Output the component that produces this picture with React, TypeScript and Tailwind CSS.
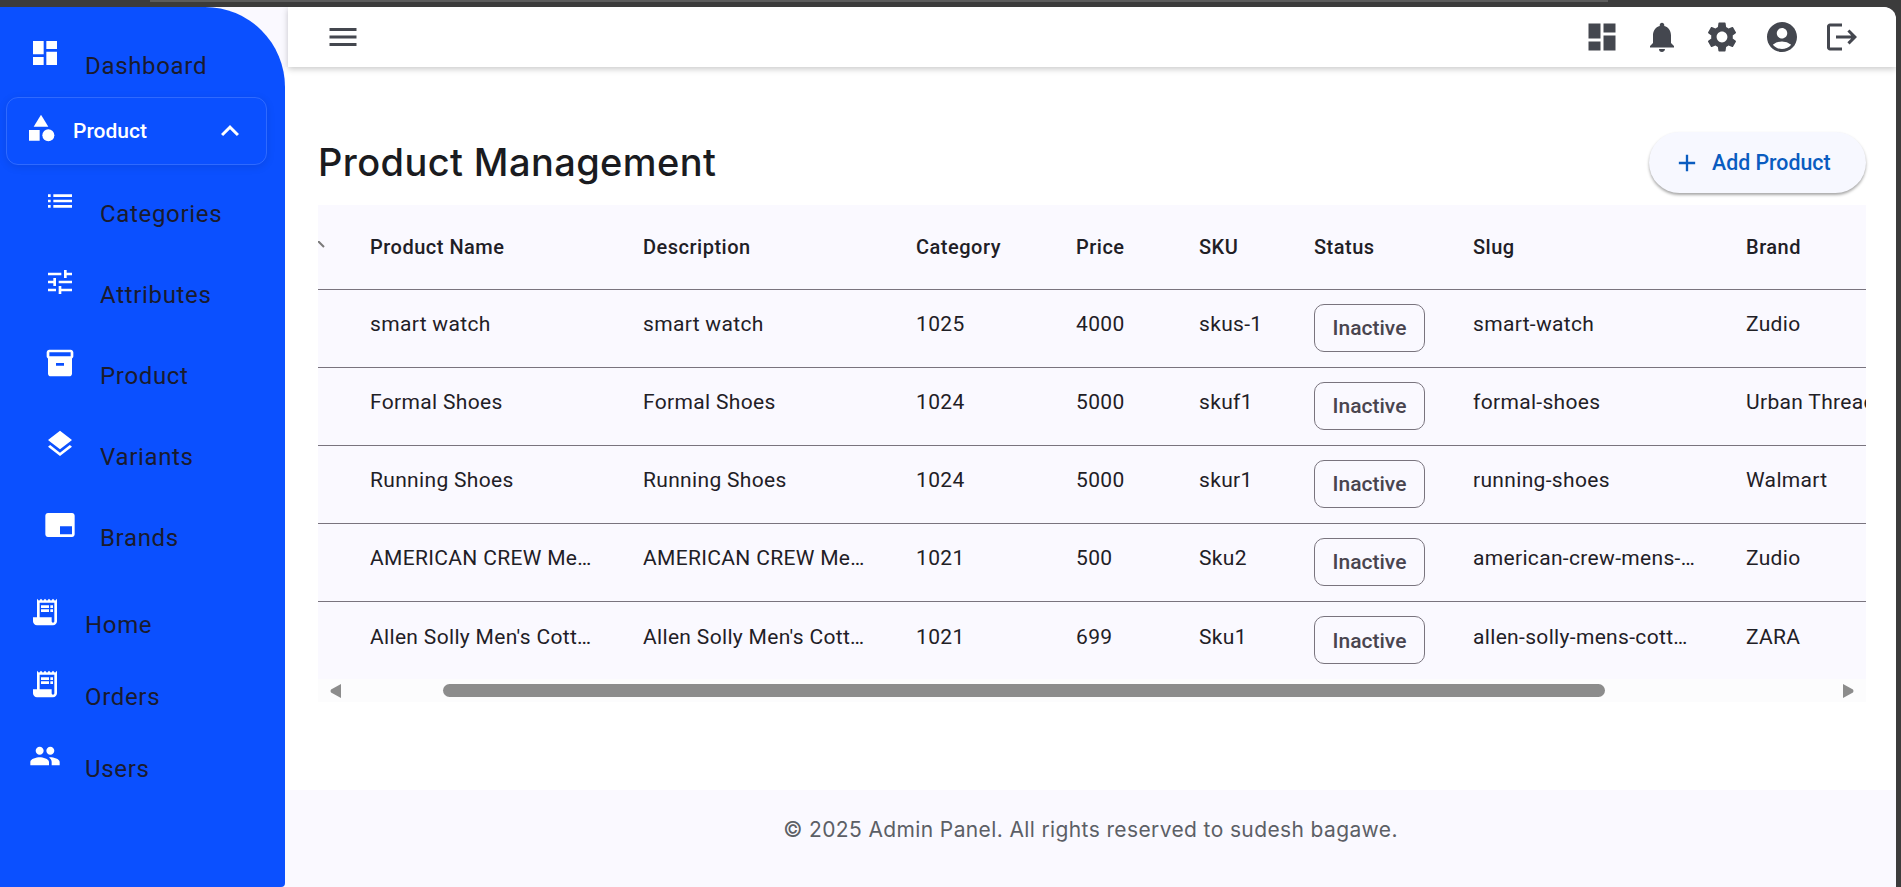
import type { ReactNode } from 'react';
import {
  MdDashboard,
  MdCategory,
  MdKeyboardArrowUp,
  MdList,
  MdTune,
  MdInventory2,
  MdLayers,
  MdBrandingWatermark,
  MdReceiptLong,
  MdPeople,
  MdMenu,
  MdNotifications,
  MdSettings,
  MdAccountCircle,
  MdAdd,
  MdLogout,
} from 'react-icons/md';

const subItems = [
  { name: 'Categories', icon: MdList },
  { name: 'Attributes', icon: MdTune },
  { name: 'Product', icon: MdInventory2 },
  { name: 'Variants', icon: MdLayers },
  { name: 'Brands', icon: MdBrandingWatermark },
];

const bottomItems = [
  { name: 'Home', icon: MdReceiptLong },
  { name: 'Orders', icon: MdReceiptLong },
  { name: 'Users', icon: MdPeople },
];

const columns = ['Product Name', 'Description', 'Category', 'Price', 'SKU', 'Status', 'Slug', 'Brand'];

const rows = [
  ['smart watch', 'smart watch', '1025', '4000', 'skus-1', 'smart-watch', 'Zudio'],
  ['Formal Shoes', 'Formal Shoes', '1024', '5000', 'skuf1', 'formal-shoes', 'Urban Threads'],
  ['Running Shoes', 'Running Shoes', '1024', '5000', 'skur1', 'running-shoes', 'Walmart'],
  ['AMERICAN CREW Mens Fiber', 'AMERICAN CREW Mens Fiber', '1021', '500', 'Sku2', 'american-crew-mens-fiber', 'Zudio'],
  ["Allen Solly Men's Cotton Shirt", "Allen Solly Men's Cotton Shirt", '1021', '699', 'Sku1', 'allen-solly-mens-cotton-shirt', 'ZARA'],
];

function NavLabel({ children }: { children: ReactNode }) {
  return <span className="mt-[13px] text-[24px] leading-[32px] tracking-[0.67px] text-[#1a1b2e]">{children}</span>;
}

function Sidebar() {
  return (
    <aside className="flex w-[285px] shrink-0 flex-col rounded-tr-[80px] rounded-br-[4px] bg-[#0b50ff] pt-[30px]">
      {/* Dashboard */}
      <div className="flex h-[60px] items-start gap-[24px] pl-[29px]">
        <MdDashboard size={32} className="shrink-0 text-white" />
        <NavLabel>Dashboard</NavLabel>
      </div>

      {/* Open group */}
      <div className="mr-[18px] ml-[6px] flex h-[68px] items-center rounded-[12px] border border-white/15 pr-[18px] pl-[18px] shadow-[0_2px_8px_rgba(0,0,0,0.1)]">
        <MdCategory size={32} className="mb-[6px] shrink-0 text-white" />
        <span className="mt-[2px] ml-[16px] flex-1 text-[21px] font-medium text-white">Product</span>
        <MdKeyboardArrowUp size={36} className="text-white" />
      </div>

      <div className="flex flex-col pt-[20px]">
        {subItems.map((item) => {
          const Icon = item.icon;
          return (
            <div key={item.name} className="flex h-[80.9px] items-start gap-[24px] pl-[44px]">
              <Icon size={32} className="shrink-0 text-white" />
              <NavLabel>{item.name}</NavLabel>
            </div>
          );
        })}
      </div>

      <div className="flex flex-col pt-[6.5px]">
        {bottomItems.map((item) => {
          const Icon = item.icon;
          return (
            <div key={item.name} className="flex h-[72px] items-start gap-[24px] pl-[29px]">
              <Icon size={32} className="shrink-0 text-white" />
              <NavLabel>{item.name}</NavLabel>
            </div>
          );
        })}
      </div>
    </aside>
  );
}

function Topbar() {
  return (
    <header className="relative z-10 ml-[3px] flex h-[60px] shrink-0 items-center justify-between rounded-tr-[12px] bg-white pr-[36px] pl-[37px] shadow-[0_2px_6px_rgba(0,0,0,0.22)]">
      <MdMenu size={36} className="text-[#44474f]" />
      <div className="flex items-center gap-[24px]">
        <MdDashboard size={36} className="text-[#44474f]" />
        <MdNotifications size={36} className="text-[#44474f]" />
        <MdSettings size={36} className="text-[#44474f]" />
        <MdAccountCircle size={36} className="text-[#44474f]" />
        <MdLogout size={36} className="text-[#44474f]" />
      </div>
    </header>
  );
}

function ProductTable() {
  return (
    <div className="overflow-hidden bg-[#faf9ff]">
      <table className="w-[1701px] table-fixed text-left text-[21px] tracking-[0.33px] text-[#1f2026]">
        <colgroup>
          <col className="w-[52px]" />
          <col className="w-[273px]" />
          <col className="w-[273px]" />
          <col className="w-[160px]" />
          <col className="w-[123px]" />
          <col className="w-[115px]" />
          <col className="w-[159px]" />
          <col className="w-[273px]" />
          <col className="w-[273px]" />
        </colgroup>
        <thead>
          <tr className="h-[84px] border-b border-[#79747e]">
            <th className="p-0">
              <svg width="8" height="8" viewBox="0 0 8 8" className="mb-[4px]">
                <path d="M0 0L6 6" stroke="#7a7a7a" strokeWidth="2" />
              </svg>
            </th>
            {columns.map((col) => (
              <th key={col} className="p-0 text-[20px] font-medium tracking-[0.5px]">
                {col}
              </th>
            ))}
          </tr>
        </thead>
        <tbody>
          {rows.map((row, i) => (
            <tr key={row[0]} className={i < rows.length - 1 ? 'h-[78px] border-b border-[#79747e]' : 'h-[78px]'}>
              <td />
              <td className="truncate pr-[49px] pb-[6px]">{row[0]}</td>
              <td className="truncate pr-[49px] pb-[6px]">{row[1]}</td>
              <td className="pb-[6px]">{row[2]}</td>
              <td className="pb-[6px]">{row[3]}</td>
              <td className="pb-[6px]">{row[4]}</td>
              <td>
                <span className="inline-flex h-[48px] w-[111px] items-center justify-center rounded-[10px] border border-[#79747e] pt-[2px] text-[21px] font-medium tracking-normal text-[#49454f]">
                  Inactive
                </span>
              </td>
              <td className="truncate pr-[49px] pb-[6px]">{row[5]}</td>
              <td className="truncate pb-[6px]">{row[6]}</td>
              <td />
            </tr>
          ))}
        </tbody>
      </table>

      {/* Scrollbar */}
      <div className="flex h-[23px] items-center bg-[#fcfcfd] px-[12px]">
        <svg width="11" height="14" viewBox="0 0 11 14">
          <path d="M11 0V14L1 8.5Q0 7 1 5.5Z" fill="#8c8c8c" />
        </svg>
        <div className="ml-[102px] h-[13px] w-[1162px] rounded-full bg-[#8c8c8c]" />
        <svg width="11" height="14" viewBox="0 0 11 14" className="ml-auto">
          <path d="M0 0V14L10 8.5Q11 7 10 5.5Z" fill="#8c8c8c" />
        </svg>
      </div>
    </div>
  );
}

export default function App() {
  return (
    <div className="flex h-[887px] flex-col overflow-hidden bg-[#3c3c3c] pr-[5px] [font-family:Roboto,sans-serif]">
      <div className="mb-[5px] ml-[150px] h-[2px] w-[1458px] shrink-0 bg-[#5c5c5c]" />
      <div className="flex flex-1 overflow-hidden rounded-tr-[12px] bg-[#faf9ff]">
        <Sidebar />
        <div className="flex min-w-0 flex-1 flex-col">
          <Topbar />
          <main className="flex-1 bg-white pt-[65px] pr-[30px] pl-[33px]">
            <div className="mb-[12px] flex h-[61px] items-center justify-between">
              <h1 className="text-[38px] font-medium tracking-[0.4px] text-[#1a1b20] [font-family:Inter,sans-serif]">Product Management</h1>
              <button className="flex h-[61px] w-[217px] items-center gap-[11px] rounded-full bg-[#f7f8ff] pl-[24px] text-[21.33px] font-medium text-[#0a5cc0] shadow-[0_2px_3px_rgba(0,0,0,0.35)]">
                <MdAdd size={28} />
                Add Product
              </button>
            </div>
            <ProductTable />
          </main>
          <footer className="flex h-[97px] shrink-0 items-center justify-center bg-[#faf9ff] pb-[18px] text-[21px] tracking-[0.38px] text-[#5c5f66] [font-family:Inter,sans-serif]">
            © 2025 Admin Panel. All rights reserved to sudesh bagawe.
          </footer>
        </div>
      </div>
    </div>
  );
}
